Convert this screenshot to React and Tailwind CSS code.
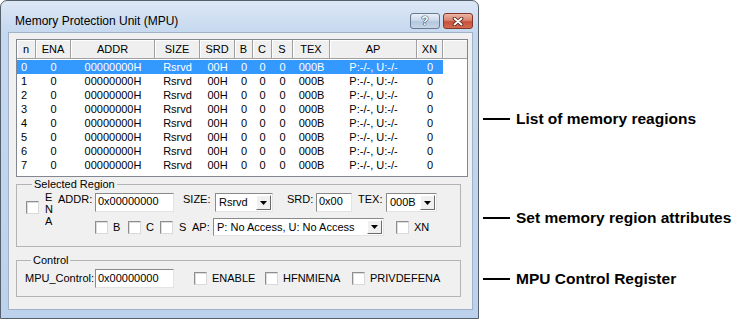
import React from 'react';

const COLS = [
  { h: 'n', w: 'w-[19px]' },
  { h: 'ENA', w: 'w-[35px]' },
  { h: 'ADDR', w: 'w-[84px]' },
  { h: 'SIZE', w: 'w-[45px]' },
  { h: 'SRD', w: 'w-[35px]' },
  { h: 'B', w: 'w-[18px]' },
  { h: 'C', w: 'w-[19px]' },
  { h: 'S', w: 'w-[21px]' },
  { h: 'TEX', w: 'w-[37px]' },
  { h: 'AP', w: 'w-[87px]' },
  { h: 'XN', w: 'w-[26px]' },
];

const ROW = ['0', '00000000H', 'Rsrvd', '00H', '0', '0', '0', '000B', 'P:-/-, U:-/-', '0'];

const Check = ({ className = '' }) => (
  <span
    className={`block w-[13px] h-[13px] shrink-0 bg-white border border-t-[#8e8e8e] border-l-[#8e8e8e] border-b-[#d9d9d9] border-r-[#d9d9d9] shadow-[inset_1px_1px_0_#dcdcdc] ${className}`}
  />
);

const Edit = ({ className = '', value }) => (
  <div
    className={`h-[19px] shrink-0 bg-white border border-t-[#8a8a8a] border-l-[#8a8a8a] border-b-[#e3e3e3] border-r-[#e3e3e3] pl-[2px] pt-[1px] leading-[13px] whitespace-nowrap ${className}`}
  >
    {value}
  </div>
);

const Combo = ({ className = '', value }) => (
  <div
    className={`flex shrink-0 bg-white border border-t-[#8a8a8a] border-l-[#8a8a8a] border-b-[#e3e3e3] border-r-[#e3e3e3] p-[1px] ${className}`}
  >
    <div className="flex-1 pl-[2px] flex items-center overflow-hidden whitespace-nowrap">{value}</div>
    <div className="w-[15px] h-full bg-[#f0f0f0] border border-t-white border-l-white border-b-[#6b6b6b] border-r-[#6b6b6b] flex items-center justify-center">
      <svg width="7" height="4" viewBox="0 0 7 4">
        <path d="M0 0H7L3.5 4Z" fill="#000" />
      </svg>
    </div>
  </div>
);

const Callout = ({ text, className = '' }) => (
  <div className={`flex items-center h-[16px] ${className}`}>
    <span className="block w-[27px] h-[2px] bg-black" />
    <span className="ml-[6px] text-[15.5px] font-bold leading-[16px] whitespace-nowrap text-black">{text}</span>
  </div>
);

export default function App() {
  return (
    <div className="w-[737px] h-[320px] bg-white flex items-start overflow-hidden font-['Liberation_Sans',Arial,sans-serif] text-black">
      {/* dialog window */}
      <div className="w-[479px] h-[319px] shrink-0 flex flex-col border border-[#56606d] rounded-t-[7px] bg-[linear-gradient(to_bottom,#dce7f5,#c5d8ef_32px,#bcd2ec)] pl-[7px] pr-[5px] pb-[8px]">
        <div className="h-[31px] flex items-start pt-[12px] pl-[7px]">
          <div className="flex-1 text-[12px] leading-[16px] whitespace-nowrap">Memory Protection Unit (MPU)</div>
          <div className="w-[30px] h-[16px] rounded-[3px] border border-[#6a7a8e] bg-[linear-gradient(to_bottom,#e8eff8,#cddaea_45%,#b4c7de_55%,#c6d6e8)] flex items-center justify-center">
            <span className="text-white font-bold text-[12px] leading-none [text-shadow:0_0_1px_#22324a,0_0_1px_#22324a,0_0_1px_#22324a]">?</span>
          </div>
          <div className="ml-[3px] w-[30px] h-[16px] rounded-[3px] border border-[#83352a] bg-[linear-gradient(to_bottom,#ebb6a6,#da8470_45%,#c8513c_55%,#d36c52)] flex items-center justify-center">
            <svg width="12" height="9" viewBox="0 0 12 9">
              <path d="M2.5 1.5L9.5 7.5M9.5 1.5L2.5 7.5" stroke="#4a1a12" strokeWidth="3.6" strokeLinecap="round" />
              <path d="M2.5 1.5L9.5 7.5M9.5 1.5L2.5 7.5" stroke="#fff" strokeWidth="2" strokeLinecap="round" />
            </svg>
          </div>
        </div>

        {/* client area */}
        <div className="flex-1 bg-[#f0f0f0] border border-[#9fb2c8] flex flex-col pl-[7px] pt-[6px] text-[11px]">
          {/* list of regions */}
          <div className="w-[452px] h-[138px] shrink-0 border border-[#828790] bg-white overflow-hidden flex flex-col">
            <div className="flex h-[19px] shrink-0">
              {COLS.map((c) => (
                <div
                  key={c.h}
                  className={`${c.w} h-full flex items-center justify-center bg-[#efefef] border-r border-b border-[#a0a0a0] shadow-[inset_1px_1px_0_#fff]`}
                >
                  {c.h}
                </div>
              ))}
              <div className="flex-1 h-full bg-[#efefef] border-b border-[#a0a0a0] shadow-[inset_1px_1px_0_#fff]" />
            </div>
            <div className="pt-[1px]">
              {[0, 1, 2, 3, 4, 5, 6, 7].map((i) => (
                <div
                  key={i}
                  className={`flex w-[426px] h-[14px] leading-[14px] ${i === 0 ? 'bg-[#3399ff] text-white' : ''}`}
                >
                  <div className="w-[19px] pl-[4px]">{i}</div>
                  {ROW.map((v, j) => (
                    <div key={j} className={`${COLS[j + 1].w} text-center whitespace-nowrap`}>
                      {v}
                    </div>
                  ))}
                </div>
              ))}
            </div>
          </div>

          {/* selected region */}
          <fieldset className="w-[445px] mt-[1px] border border-[#b4b4b4] pl-[9px] pb-[10px]">
            <legend className="ml-[6px] px-[2px] leading-[13px]">Selected Region</legend>
            <div className="flex items-start">
              <div className="flex items-start">
                <Check className="mt-[10px]" />
                <div className="ml-[6px] w-[8px] leading-[12px]">
                  E<br />N<br />A
                </div>
              </div>
              <div className="ml-[5px] flex flex-col">
                <div className="flex items-start h-[19px] mt-[2px]">
                  <span className="w-[37px] leading-[12px]">ADDR:</span>
                  <Edit className="w-[79px]" value="0x00000000" />
                  <span className="ml-[9px] w-[32px] leading-[12px]">SIZE:</span>
                  <Combo className="w-[58px] h-[19px]" value="Rsrvd" />
                  <span className="ml-[14px] w-[29px] leading-[12px]">SRD:</span>
                  <Edit className="w-[36px]" value="0x00" />
                  <span className="ml-[6px] w-[28px] leading-[12px]">TEX:</span>
                  <Combo className="w-[51px] h-[19px]" value="000B" />
                </div>
                <div className="flex items-center h-[18px] mt-[6px]">
                  <Check className="ml-[37px]" />
                  <span className="ml-[5px] w-[15px]">B</span>
                  <Check />
                  <span className="ml-[5px] w-[14px]">C</span>
                  <Check />
                  <span className="ml-[6px] w-[13px]">S</span>
                  <span className="w-[21px]">AP:</span>
                  <Combo className="w-[171px] h-[18px]" value="P: No Access, U: No Access" />
                  <Check className="ml-[12px]" />
                  <span className="ml-[5px]">XN</span>
                </div>
              </div>
            </div>
          </fieldset>

          {/* control register */}
          <fieldset className="w-[445px] mt-[7px] border border-[#b4b4b4] pl-[8px] pb-[8px]">
            <legend className="ml-[6px] px-[2px] leading-[13px]">Control</legend>
            <div className="flex items-center h-[19px] mt-[2px]">
              <span className="w-[70px] whitespace-nowrap">MPU_Control:</span>
              <Edit className="w-[79px] pt-[2px]" value="0x00000000" />
              <Check className="ml-[20px]" />
              <span className="ml-[5px] w-[53px]">ENABLE</span>
              <Check />
              <span className="ml-[5px] w-[69px]">HFNMIENA</span>
              <Check />
              <span className="ml-[5px]">PRIVDEFENA</span>
            </div>
          </fieldset>
        </div>
      </div>

      {/* annotations */}
      <div className="flex flex-col pl-[4px] pt-[111px]">
        <Callout text="List of memory reagions" />
        <Callout className="mt-[83px]" text="Set memory region attributes" />
        <Callout className="mt-[45px]" text="MPU Control Register" />
      </div>
    </div>
  );
}
